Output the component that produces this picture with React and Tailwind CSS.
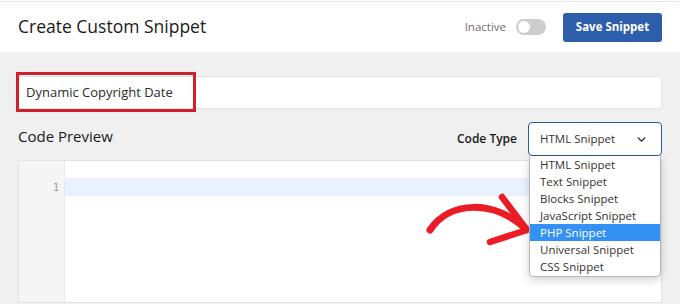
import { ChevronDown } from 'lucide-react'

const TYPES = [
  'HTML Snippet',
  'Text Snippet',
  'Blocks Snippet',
  'JavaScript Snippet',
  'PHP Snippet',
  'Universal Snippet',
  'CSS Snippet',
]

export default function App() {
  return (
    <div className="relative w-[680px] h-[304px] overflow-hidden bg-[#f0f0f1] font-['Open_Sans',sans-serif] text-[#1d2327]">
      {/* ── Header ─────────────────────────────────────────── */}
      <div className="pt-px bg-white">
        <header className="h-[51px] bg-white border-t border-[#e6e6e6] flex items-center justify-between pl-[18px] pr-[18px]">
          <h1 className="text-[17.5px] font-medium text-[#1a1a1a] pb-[2px]">Create Custom Snippet</h1>
          <div className="flex items-center">
            <span className="text-[11.5px] text-[#6f6f6f] mr-[10px]">Inactive</span>
            <span className="relative w-[30px] h-[16px] rounded-full bg-[#cdcdcd]">
              <span className="absolute left-[2px] top-[2px] w-[12px] h-[12px] rounded-full bg-white" />
            </span>
            <button className="ml-[17px] w-[99px] h-[29px] rounded-[3px] bg-[#2d5eab] text-white text-[11.5px] font-bold">
              Save Snippet
            </button>
          </div>
        </header>
      </div>

      {/* ── Body ───────────────────────────────────────────── */}
      <main className="px-[18px] pt-[24px]">
        <div className="relative">
          <div className="h-[33px] bg-white border border-[#e4e4e6] rounded-[3px] flex items-center pl-[7px] text-[13px] text-[#2c2c2c]">
            Dynamic Copyright Date
          </div>
          <div className="absolute -left-[2px] -top-[4px] w-[180px] h-[40px] border-[3px] border-[#d0202e]" />
        </div>

        <div className="mt-[13px] flex items-center justify-between">
          <h2 className="text-[15px] font-medium text-[#1a1a1a] pb-[5px]">Code Preview</h2>
          <div className="flex items-center">
            <span className="text-[12px] font-semibold text-[#1a1a1a] mr-[11px]">Code Type</span>
            <div className="relative">
              <div className="w-[134px] h-[34px] border border-[#2f5a9e] rounded-[4px] bg-white flex items-center justify-between pl-[11px] pr-[13px] text-[11.5px] text-[#333]">
                <span>HTML Snippet</span>
                <ChevronDown size={13} strokeWidth={2.5} className="text-[#222]" />
              </div>
              <ul className="absolute z-10 top-full left-px w-[132px] bg-white border border-[#b9b9b9] border-t-0 rounded-b-[5px] shadow-[0_3px_8px_rgba(0,0,0,0.18)] pb-[1px] text-[11.5px] text-[#333]">
                {TYPES.map((t) => (
                  <li
                    key={t}
                    className={`h-[17px] leading-[17px] pl-[10px] ${t === 'PHP Snippet' ? 'bg-[#3391f5] text-white' : ''}`}
                  >
                    {t}
                  </li>
                ))}
              </ul>
            </div>
          </div>
        </div>

        {/* ── Code editor ─────────────────────────────────── */}
        <div className="mt-[4px] h-[143px] flex bg-white border border-[#e2e2e2]">
          <div className="w-[46px] bg-[#f5f5f5] border-r border-[#eaeaea] pt-[17px]">
            <div className="h-[18px] leading-[20px] text-right pr-[5px] text-[10px] text-[#999] font-['DejaVu_Sans_Mono',monospace]">1</div>
          </div>
          <div className="flex-1 pt-[17px]">
            <div className="h-[18px] bg-[#e8f1fd]" />
          </div>
        </div>
      </main>

      {/* ── Red hand-drawn arrow ───────────────────────────── */}
      <svg className="absolute left-[420px] top-[190px]" width="115" height="60" viewBox="0 0 115 60" fill="none">
        <path d="M10 40 C30 10, 75 10, 106 39" stroke="#ec1c24" strokeWidth="7" strokeLinecap="round" />
        <path d="M82 7 L107 40 L70 52" stroke="#ec1c24" strokeWidth="6.5" strokeLinecap="round" strokeLinejoin="round" />
      </svg>
    </div>
  )
}
